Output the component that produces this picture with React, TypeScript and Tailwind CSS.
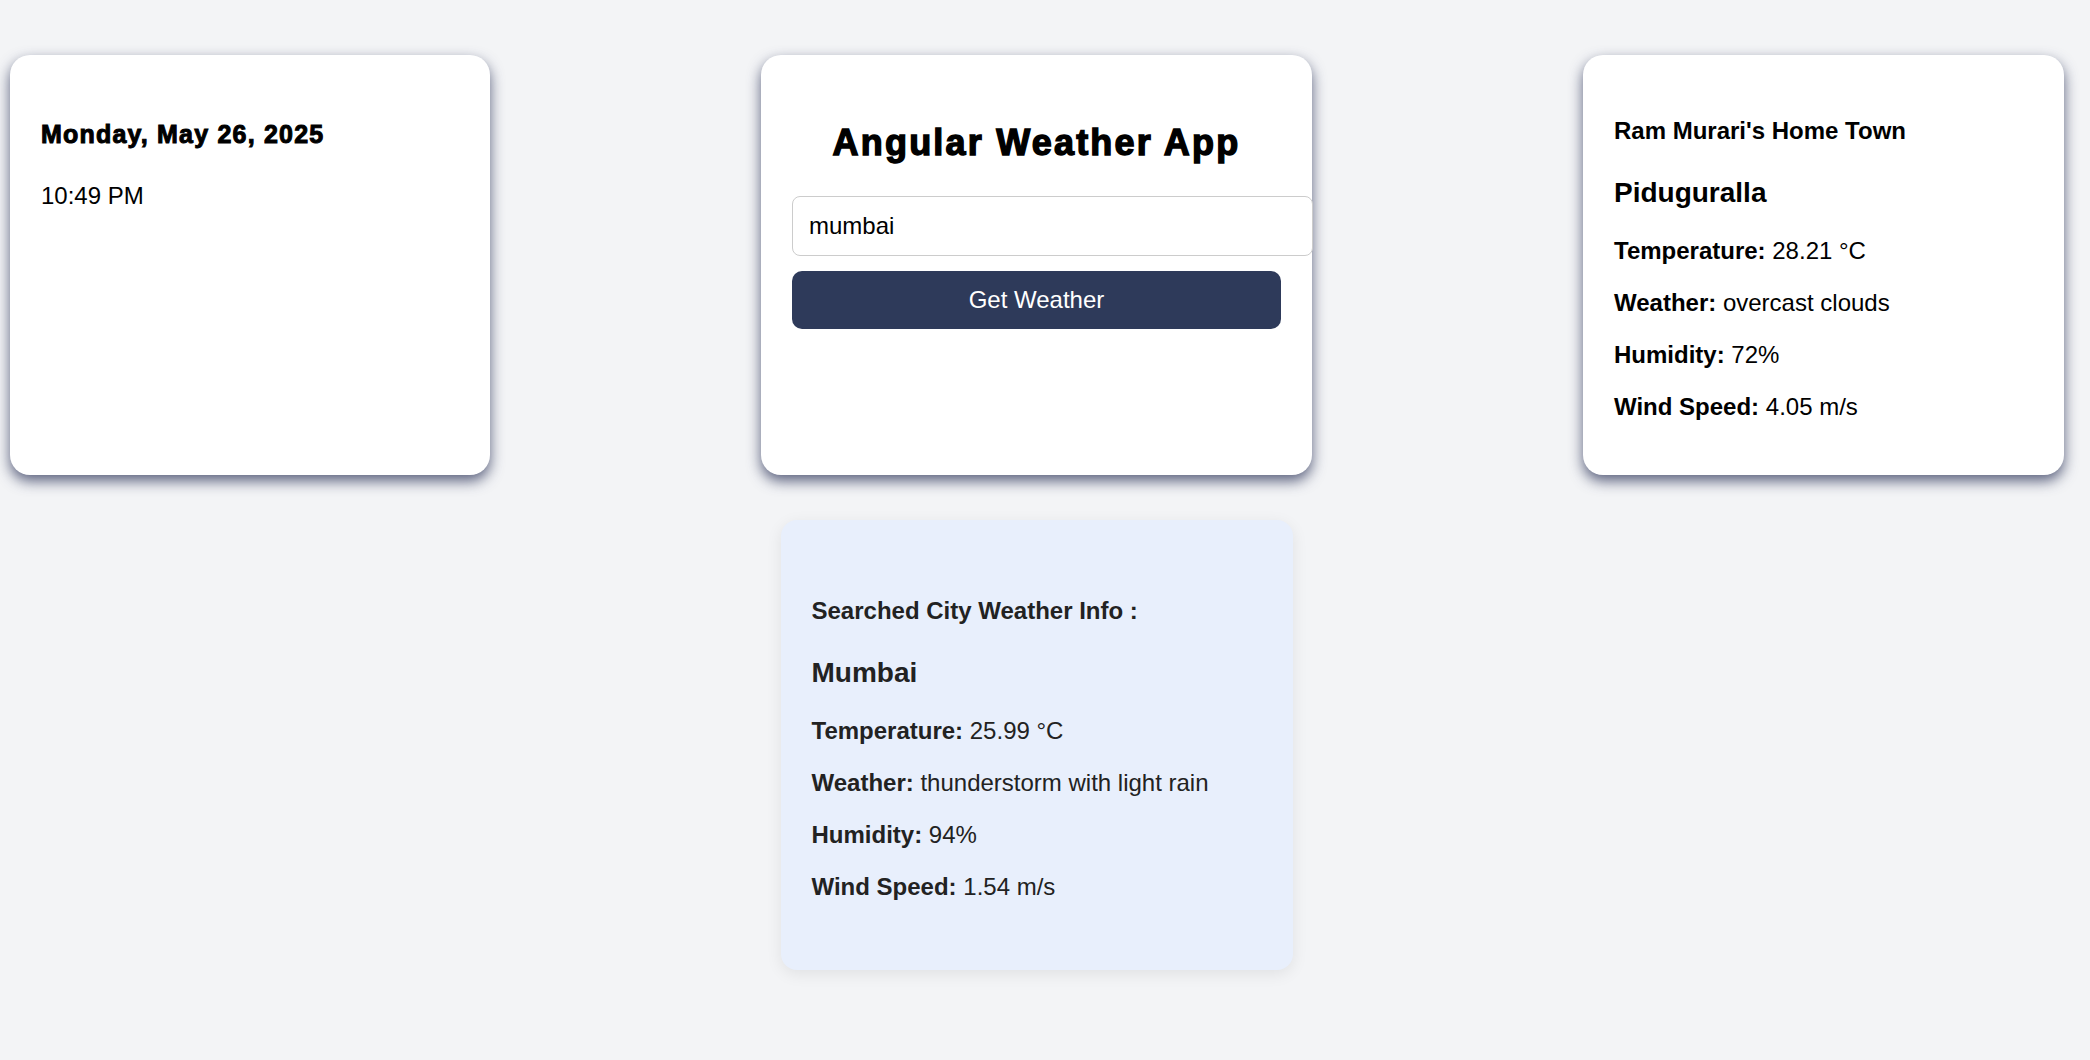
const font = { fontFamily: '"Liberation Sans", Arial, sans-serif' };

type Info = { label: string; value: string };

const homeRows: Info[] = [
  { label: "Temperature:", value: "28.21 °C" },
  { label: "Weather:", value: "overcast clouds" },
  { label: "Humidity:", value: "72%" },
  { label: "Wind Speed:", value: "4.05 m/s" },
];

const searchedRows: Info[] = [
  { label: "Temperature:", value: "25.99 °C" },
  { label: "Weather:", value: "thunderstorm with light rain" },
  { label: "Humidity:", value: "94%" },
  { label: "Wind Speed:", value: "1.54 m/s" },
];

const WeatherRows = ({ rows }: { rows: Info[] }) => (
  <div className="mt-[28px] flex flex-col gap-[24px]">
    {rows.map((r) => (
      <p key={r.label} className="text-[24px] leading-[28px]">
        <span className="font-bold">{r.label}</span> {r.value}
      </p>
    ))}
  </div>
);

export default function App() {
  return (
    <div className="min-h-screen bg-[#f3f4f6] pt-[55px]" style={font}>
      <div className="flex items-start justify-between pl-[10px] pr-[26px]">
        {/* date card */}
        <div className="h-[420px] w-[480px] shrink-0 rounded-[20px] bg-white pl-[31px] pt-[64px] text-black shadow-[0_6px_14px_rgba(40,48,85,0.75)]">
          <h3 className="text-[25px] font-bold leading-[30px] tracking-[1.2px] [-webkit-text-stroke:1px_black]">
            Monday, May 26, 2025
          </h3>
          <p className="mt-[33px] text-[24px] leading-[28px]">10:49 PM</p>
        </div>

        {/* middle column: search + result */}
        <div className="flex w-[551px] shrink-0 flex-col items-center gap-[45px]">
          <div className="h-[420px] w-[551px] rounded-[20px] bg-white pl-[31px] pt-[67px] text-black shadow-[0_6px_14px_rgba(40,48,85,0.75)]">
            <h1 className="pr-[31px] text-center text-[36px] font-bold leading-[42px] tracking-[2.2px] [-webkit-text-stroke:1.4px_black]">
              Angular Weather App
            </h1>
            <input
              defaultValue="mumbai"
              className="mt-[32px] block h-[60px] w-[521px] rounded-[8px] border border-[#cccccc] bg-white px-[16px] text-[24px] text-black outline-none"
            />
            <button className="mt-[15px] block h-[58px] w-[489px] rounded-[10px] bg-[#2e3a5a] text-[24px] text-white">
              Get Weather
            </button>
          </div>

          <div className="h-[450px] w-[512px] rounded-[16px] bg-[#e8effc] pl-[31px] pt-[77px] text-[#222222] shadow-[0_4px_16px_rgba(0,0,0,0.08)]">
            <h3 className="text-[24px] font-bold leading-[28px]">Searched City Weather Info :</h3>
            <h2 className="mt-[32px] text-[28px] font-bold leading-[32px]">Mumbai</h2>
            <WeatherRows rows={searchedRows} />
          </div>
        </div>

        {/* home town card */}
        <div className="h-[420px] w-[481px] shrink-0 rounded-[20px] bg-white pl-[31px] pt-[62px] text-black shadow-[0_6px_14px_rgba(40,48,85,0.75)]">
          <h3 className="text-[24px] font-bold leading-[28px]">Ram Murari's Home Town</h3>
          <h2 className="mt-[32px] text-[28px] font-bold leading-[32px]">Piduguralla</h2>
          <WeatherRows rows={homeRows} />
        </div>
      </div>
    </div>
  );
}
